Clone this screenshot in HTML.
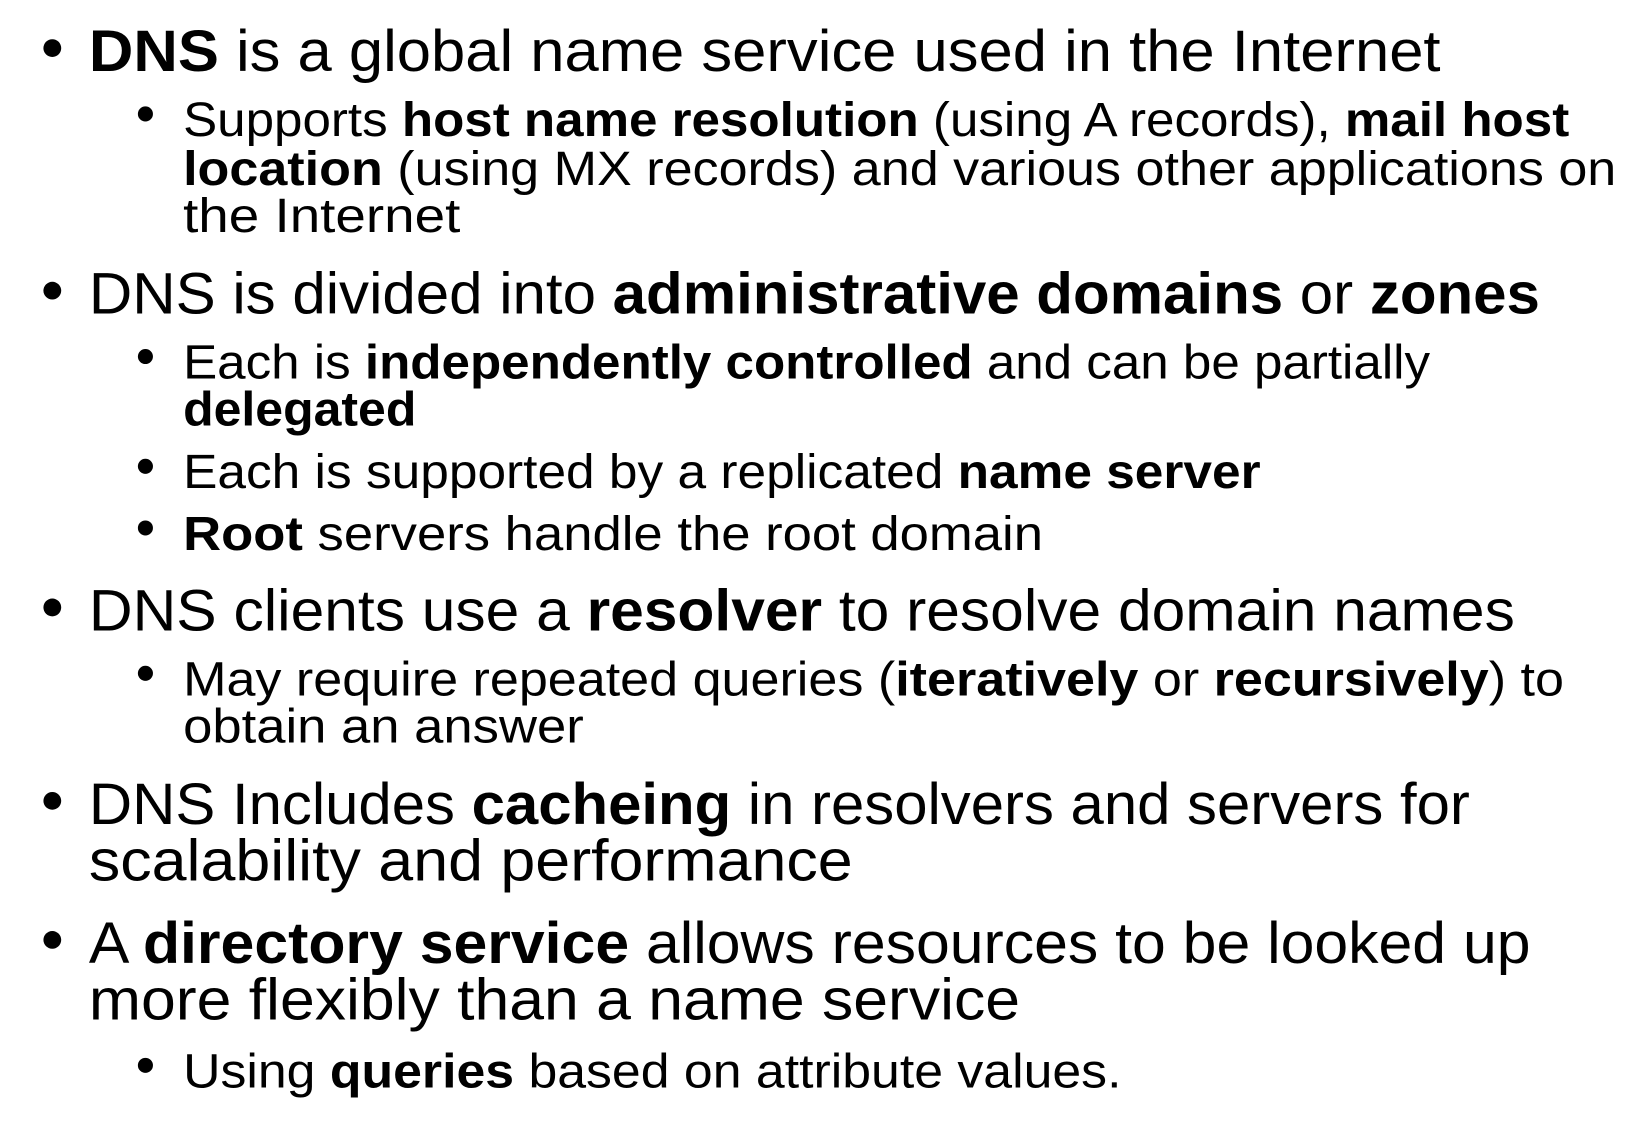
<!DOCTYPE html>
<html><head><meta charset="utf-8"><style>
html,body{margin:0;padding:0;background:#fff;width:1632px;height:1126px;overflow:hidden}
svg{display:block}
text{font-family:"Liberation Sans",sans-serif;fill:#000}
.a{font-size:56px}
.b{font-size:46px}
tspan.k{font-weight:bold}
</style></head><body>
<svg width="1632" height="1126" viewBox="0 0 1560 1077" preserveAspectRatio="none">
<g fill="#000">
<circle cx="50" cy="46" r="8.5"/>
<circle cx="139" cy="109" r="7.2"/>
<circle cx="50" cy="278" r="8.5"/>
<circle cx="139" cy="341" r="7.2"/>
<circle cx="139" cy="446" r="7.2"/>
<circle cx="139" cy="505" r="7.2"/>
<circle cx="50" cy="581" r="8.5"/>
<circle cx="139" cy="644" r="7.2"/>
<circle cx="50" cy="766" r="8.5"/>
<circle cx="50" cy="899" r="8.5"/>
<circle cx="139" cy="1019" r="7.2"/>
</g>
<text class="a" x="85" y="68" textLength="1292" lengthAdjust="spacingAndGlyphs"><tspan class="k">DNS</tspan> is a global name service used in the Internet</text>
<text class="b" x="175" y="130" textLength="1325" lengthAdjust="spacingAndGlyphs">Supports <tspan class="k">host name resolution</tspan> (using A records), <tspan class="k">mail host</tspan></text>
<text class="b" x="175" y="177" textLength="1370" lengthAdjust="spacingAndGlyphs"><tspan class="k">location</tspan> (using MX records) and various other applications on</text>
<text class="b" x="175" y="222" textLength="265" lengthAdjust="spacingAndGlyphs">the Internet</text>
<text class="a" x="85" y="300" textLength="1387" lengthAdjust="spacingAndGlyphs">DNS is divided into <tspan class="k">administrative domains</tspan> or <tspan class="k">zones</tspan></text>
<text class="b" x="175" y="362" textLength="1192" lengthAdjust="spacingAndGlyphs">Each is <tspan class="k">independently controlled</tspan> and can be partially</text>
<text class="b" x="175" y="407" textLength="223" lengthAdjust="spacingAndGlyphs"><tspan class="k">delegated</tspan></text>
<text class="b" x="175" y="467" textLength="1030" lengthAdjust="spacingAndGlyphs">Each is supported by a replicated <tspan class="k">name server</tspan></text>
<text class="b" x="175" y="526" textLength="822" lengthAdjust="spacingAndGlyphs"><tspan class="k">Root</tspan> servers handle the root domain</text>
<text class="a" x="85" y="603" textLength="1363" lengthAdjust="spacingAndGlyphs">DNS clients use a <tspan class="k">resolver</tspan> to resolve domain names</text>
<text class="b" x="175" y="665" textLength="1320" lengthAdjust="spacingAndGlyphs">May require repeated queries (<tspan class="k">iteratively</tspan> or <tspan class="k">recursively</tspan>) to</text>
<text class="b" x="175" y="710" textLength="383" lengthAdjust="spacingAndGlyphs">obtain an answer</text>
<text class="a" x="85" y="788" textLength="1320" lengthAdjust="spacingAndGlyphs">DNS Includes <tspan class="k">cacheing</tspan> in resolvers and servers for</text>
<text class="a" x="85" y="842" textLength="730" lengthAdjust="spacingAndGlyphs">scalability and performance</text>
<text class="a" x="85" y="921" textLength="1378" lengthAdjust="spacingAndGlyphs">A <tspan class="k">directory service</tspan> allows resources to be looked up</text>
<text class="a" x="85" y="975" textLength="890" lengthAdjust="spacingAndGlyphs">more flexibly than a name service</text>
<text class="b" x="175" y="1040" textLength="897" lengthAdjust="spacingAndGlyphs">Using <tspan class="k">queries</tspan> based on attribute values.</text>
</svg>
</body></html>
